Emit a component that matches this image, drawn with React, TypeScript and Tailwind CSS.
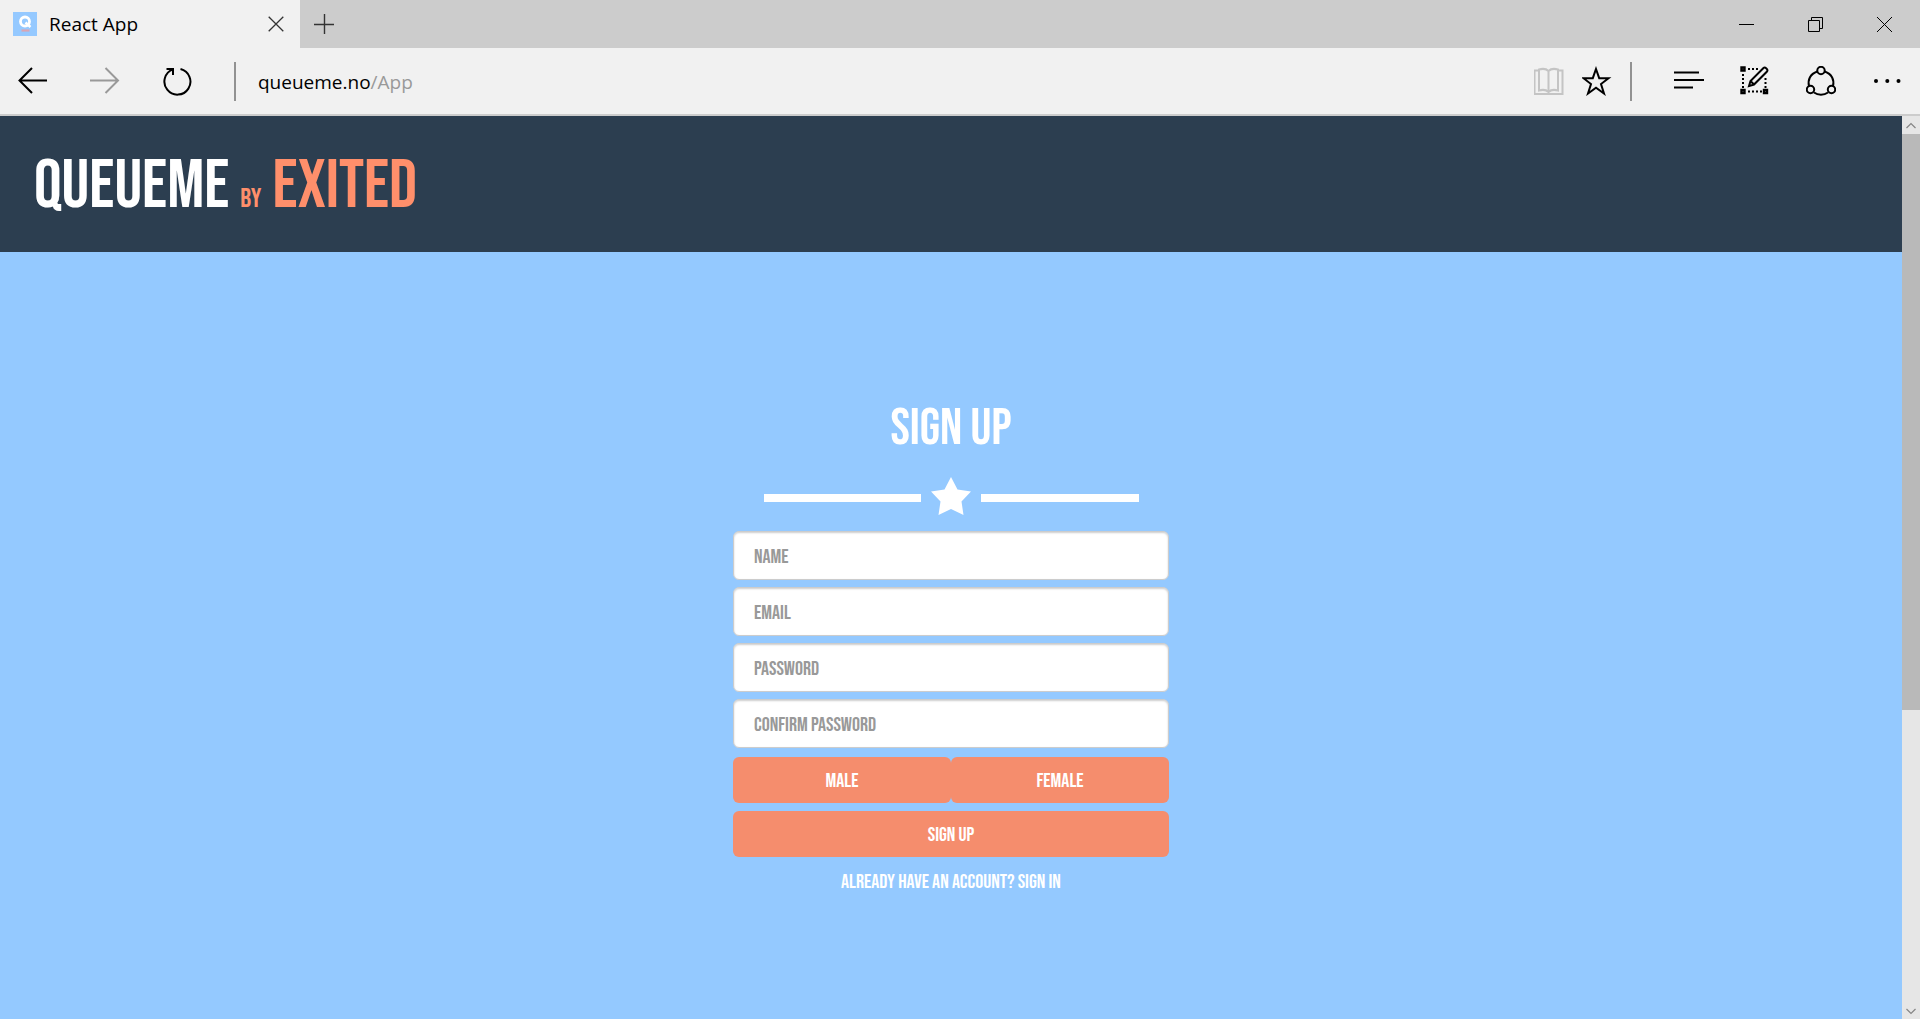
import React from "react";

type IconProps = { children: React.ReactNode; className?: string };

function Icon({ children, className = "" }: IconProps) {
  return (
    <svg
      viewBox="0 0 30 30"
      fill="none"
      stroke="currentColor"
      strokeWidth="2"
      aria-hidden="true"
      className={`block size-[30px] shrink-0 ${className}`}
    >
      {children}
    </svg>
  );
}

function ToolButton({ label, children, className = "" }: IconProps & { label: string }) {
  return (
    <button type="button" aria-label={label} className={`shrink-0 ${className}`}>
      <Icon>{children}</Icon>
    </button>
  );
}

function TitleBar() {
  return (
    <div className="flex h-12 shrink-0 bg-[#cccccc]">
      <div className="flex w-[300px] items-center bg-[#f1f1f1] pl-[13px] pr-4">
        <svg viewBox="0 0 24 24" className="size-6" aria-hidden="true">
          <rect width="24" height="24" fill="#95c9ff" />
          <circle cx="12" cy="9.5" r="4.5" fill="none" stroke="#fff" strokeWidth="2.8" />
          <path d="M12.5 10.5 17.5 15" stroke="#fff" strokeWidth="2.4" />
          <path d="M8.5 18.5h8" stroke="#d9a5b4" strokeWidth="2.2" />
        </svg>
        <span className="ml-3 grow text-[19px] text-black">React App</span>
        <button type="button" aria-label="Close tab">
          <svg viewBox="0 0 16 16" className="size-4" fill="none" stroke="#333" strokeWidth="1.3" aria-hidden="true">
            <path d="M.7.7l14.6 14.6M15.3.7.7 15.3" />
          </svg>
        </button>
      </div>
      <button type="button" aria-label="New tab" className="px-3.5">
        <svg viewBox="0 0 20 20" className="size-5" fill="none" stroke="#333" strokeWidth="1.4" aria-hidden="true">
          <path d="M10.5 0v20M0 10.500h20" />
        </svg>
      </button>
      <div className="ml-auto flex pr-px text-black">
        <button type="button" aria-label="Minimize" className="flex w-[69px] items-center justify-center">
          <svg viewBox="0 0 15 15" className="size-[15px]" fill="none" stroke="currentColor" aria-hidden="true">
            <path d="M0 7.5h15" />
          </svg>
        </button>
        <button type="button" aria-label="Restore" className="flex w-[69px] items-center justify-center">
          <svg viewBox="0 0 15 15" className="size-[15px]" fill="none" stroke="currentColor" aria-hidden="true">
            <path d="M.5 3.5h11v11H.5zM3.5 3.5v-3h11v11h-3" />
          </svg>
        </button>
        <button type="button" aria-label="Close window" className="flex w-[69px] items-center justify-center">
          <svg viewBox="0 0 15 15" className="size-[15px]" fill="none" stroke="currentColor" aria-hidden="true">
            <path d="M0 0l15 15M15 0 0 15" />
          </svg>
        </button>
      </div>
    </div>
  );
}

function Toolbar() {
  return (
    <div className="flex h-[68px] shrink-0 items-center border-b-2 border-[#cccccc] bg-[#f1f1f1] px-[18px] text-black">
      <div className="flex items-center gap-[42px]">
        <ToolButton label="Back">
          <path d="M29 14.5H1.5M14 2 1.5 14.5 14 27" />
        </ToolButton>
        <ToolButton label="Forward" className="text-[#999999]">
          <path d="M0 14.5h28M15.5 2 28 14.5 15.5 27" />
        </ToolButton>
        <ToolButton label="Refresh">
          <path d="M18.5 3a13 13 0 1 1-7.5.4M4.5 3H11v6" />
        </ToolButton>
        <div className="h-[39px] w-0.5 bg-[#929292]" />
      </div>
      <p className="ml-[22px] grow pt-0.5 text-[19px]">
        queueme.no<span className="text-[#999999]">/App</span>
      </p>
      <div className="flex items-center gap-[18px]">
        <ToolButton label="Reading view" className="text-[#c4c4c4]">
          <path d="M4 4.500H.500v23.500h28V4.500h-4" />
          <path d="M14.500 5c-2-2-6-2.500-9.500-1.500v21c3.500-1 7.500-.5 9.500 1.500 2-2 6-2.500 9.500-1.500v-21C20.500 2.500 16.500 3 14.500 5zM14.500 5v21" />
        </ToolButton>
        <ToolButton label="Add to favorites">
          <path d="M14 3l3.200 9.200h9.300l-7.500 5.800 3 9.500-8-5.800-8 5.800 3-9.500-7.500-5.800h9.300z" />
        </ToolButton>
        <div className="h-[39px] w-0.5 bg-[#929292]" />
      </div>
      <div className="ml-[42px] flex items-center gap-9">
        <ToolButton label="Hub">
          <path d="M0 6.500h25M0 14h30M0 21.500h19" />
        </ToolButton>
        <ToolButton label="Make a web note">
          <path d="M1.500 1.500h3v3h-3zM1.500 24h3v3h-3zM24 24h3v3h-3z" strokeWidth="2.400" />
          <path d="M8 3h10M3 8v14M8 25.500h14M25.500 22V11" strokeDasharray="2 2" />
          <path d="M9 20l1.500-5L23.500 2c1.500-1.500 5 1.500 3.500 3.500L14 18.500zM10.500 15l3.500 3.500" />
        </ToolButton>
        <ToolButton label="Share">
          <circle cx="15" cy="4.500" r="3.700" />
          <circle cx="4.500" cy="23.500" r="3.700" />
          <circle cx="25.500" cy="23.500" r="3.700" />
          <path d="M11.300 5.500C4 8 1.500 14 3 20M18.700 5.500C26 8 28.500 14 27 20M8 26.500c4 3 10 3 14 0" />
        </ToolButton>
        <ToolButton label="More">
          <g fill="currentColor" stroke="none">
            <circle cx="4" cy="15" r="2" />
            <circle cx="15.300" cy="15" r="2" />
            <circle cx="26.500" cy="15" r="2" />
          </g>
        </ToolButton>
      </div>
    </div>
  );
}

function Field({ label, type = "text" }: { label: string; type?: string }) {
  return (
    <input
      type={type}
      aria-label={label}
      placeholder={label}
      className="h-[49px] w-full rounded-md border border-[#cccccc] bg-white px-5 pt-0.5 text-xl text-[#555555] shadow-[inset_0_1px_2px_rgba(0,0,0,0.2)] outline-none placeholder:text-[#999999]"
    />
  );
}

const orangeButton = "h-[46px] rounded-md bg-[#f58d6d] pt-0.5 text-xl text-white";

function SignUp() {
  return (
    <main className="flex grow flex-col items-center bg-[#94c9ff] pt-[153px] text-white">
      <h1 className="text-[52px] leading-12">SIGN UP</h1>
      <div className="mt-7 flex w-[375px] items-center gap-2.5" aria-hidden="true">
        <div className="h-2 grow bg-white" />
        <svg viewBox="0 0 40 38" className="-mt-1 h-[38px] w-10" fill="#fff">
          <path d="M20 0 26.500 12.500 40 14.500 30.500 24.500 32.500 38 20 32 7.500 38 9.500 24.500 0 14.500 13.500 12.500z" />
        </svg>
        <div className="h-2 grow bg-white" />
      </div>
      <form className="mt-4 flex w-[436px] flex-col gap-[7px]">
        <Field label="NAME" />
        <Field label="EMAIL" type="email" />
        <Field label="PASSWORD" type="password" />
        <Field label="CONFIRM PASSWORD" type="password" />
        <div className="mt-0.5 grid grid-cols-2">
          <button type="button" className={orangeButton}>MALE</button>
          <button type="button" className={orangeButton}>FEMALE</button>
        </div>
        <button type="submit" className={`mt-px ${orangeButton}`}>SIGN UP</button>
      </form>
      <a href="#signin" className="mt-[11px] text-xl leading-7">
        ALREADY HAVE AN ACCOUNT? SIGN IN
      </a>
    </main>
  );
}

function Scrollbar() {
  return (
    <div className="flex w-[18px] shrink-0 flex-col bg-[#e6e6e6] text-[#858585]" aria-hidden="true">
      <svg viewBox="0 0 18 18" className="size-[18px] shrink-0" fill="none" stroke="currentColor" strokeWidth="1.200">
        <path d="M4.500 12 9 7.500 13.500 12" />
      </svg>
      <div className="flex grow flex-col">
        <div className="h-[66.4%] bg-[#b9b9b9]" />
      </div>
      <svg viewBox="0 0 18 18" className="size-[18px] shrink-0" fill="none" stroke="currentColor" strokeWidth="1.200">
        <path d="M4.500 8 9 12.500 13.500 8" />
      </svg>
    </div>
  );
}

export default function App() {
  return (
    <div className="flex h-screen flex-col overflow-hidden font-['Segoe_UI','Open_Sans',sans-serif]">
      <TitleBar />
      <Toolbar />
      <div className="flex min-h-0 grow">
        <div className="flex min-w-0 grow flex-col overflow-hidden font-['Bebas_Neue','Liberation_Sans_Narrow','Liberation_Sans',sans-serif]">
          <header className="flex h-[136px] shrink-0 items-center bg-[#2c3e50] px-[34px] pt-1">
            <p className="flex items-baseline gap-[11px] whitespace-nowrap text-[#ff8f6b]">
              <span className="text-[69px] leading-none text-white">QUEUEME</span>
              <span className="text-[27px] leading-none">BY</span>
              <span className="text-[69px] leading-none">EXITED</span>
            </p>
          </header>
          <SignUp />
        </div>
        <Scrollbar />
      </div>
    </div>
  );
}
